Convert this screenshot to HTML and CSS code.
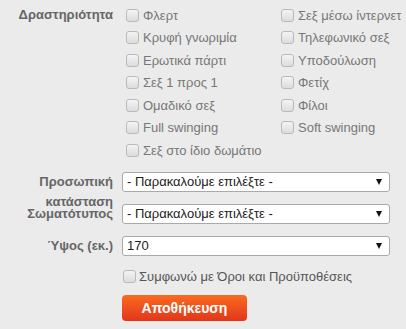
FILE: index.html
```html
<!DOCTYPE html>
<html lang="el">
<head>
  <meta charset="UTF-8" />
  <meta name="viewport" content="width=device-width, initial-scale=1.0" />
  <title>Προφίλ</title>
  <link rel="stylesheet" href="styles.css">
</head>
<body>

<form class="profile-form">
  <div class="form-row">
    <label class="form-label">Δραστηριότητα</label>
    <div class="check-grid">
      <label class="check"><input type="checkbox" /> Φλερτ</label>
      <label class="check"><input type="checkbox" /> Σεξ μέσω ίντερνετ</label>
      <label class="check"><input type="checkbox" /> Κρυφή γνωριμία</label>
      <label class="check"><input type="checkbox" /> Τηλεφωνικό σεξ</label>
      <label class="check"><input type="checkbox" /> Ερωτικά πάρτι</label>
      <label class="check"><input type="checkbox" /> Υποδούλωση</label>
      <label class="check"><input type="checkbox" /> Σεξ 1 προς 1</label>
      <label class="check"><input type="checkbox" /> Φετίχ</label>
      <label class="check"><input type="checkbox" /> Ομαδικό σεξ</label>
      <label class="check"><input type="checkbox" /> Φίλοι</label>
      <label class="check"><input type="checkbox" /> Full swinging</label>
      <label class="check"><input type="checkbox" /> Soft swinging</label>
      <label class="check"><input type="checkbox" /> Σεξ στο ίδιο δωμάτιο</label>
    </div>
  </div>

  <div class="form-row select-row">
    <label class="form-label">Προσωπική κατάσταση</label>
    <div class="select-wrap">
      <select><option>- Παρακαλούμε επιλέξτε -</option></select>
    </div>
  </div>

  <div class="form-row select-row">
    <label class="form-label">Σωματότυπος</label>
    <div class="select-wrap">
      <select><option>- Παρακαλούμε επιλέξτε -</option></select>
    </div>
  </div>

  <div class="form-row select-row">
    <label class="form-label">Ύψος (εκ.)</label>
    <div class="select-wrap">
      <select><option>170</option></select>
    </div>
  </div>

  <div class="form-row terms-row">
    <span class="form-label"></span>
    <label class="terms"><input type="checkbox" /> Συμφωνώ με Όροι και Προϋποθέσεις</label>
  </div>

  <div class="form-row">
    <span class="form-label"></span>
    <button type="button" class="save-btn">Αποθήκευση</button>
  </div>
</form>

</body>
</html>
```

FILE: styles.css
```css
body {
  margin: 0;
  background: #ebebeb;
  font-family: "Liberation Sans", Arial, sans-serif;
  font-size: 13px;
  color: #777;
}

.profile-form {
  padding-top: 4px;
}

.form-row {
  display: flex;
  align-items: flex-start;
}

.form-label {
  flex: 0 0 113px;
  padding-right: 9px;
  text-align: right;
  font-weight: bold;
  color: #666;
  line-height: 22px;
}

.check-grid {
  display: grid;
  grid-template-columns: 155px auto;
  grid-auto-rows: 22.5px;
}

.check {
  display: flex;
  align-items: center;
  white-space: nowrap;
}

input[type="checkbox"] {
  appearance: none;
  -webkit-appearance: none;
  width: 13px;
  height: 13px;
  margin: 0 4px 0 4px;
  border: 1px solid #b9b9b9;
  border-radius: 3px;
  background: linear-gradient(#f4f4f4, #dcdcdc);
}

.select-row {
  margin-top: 10px;
  height: 22px;
}

.select-row .form-label {
  line-height: 20px;
}

.select-wrap {
  position: relative;
  width: 268px;
}

.select-wrap select {
  appearance: none;
  -webkit-appearance: none;
  width: 100%;
  height: 20px;
  padding: 0 4px;
  border: 1px solid #a9a9a9;
  border-radius: 3px;
  background: #fff;
  font-family: "Liberation Sans", Arial, sans-serif;
  font-size: 13px;
  color: #222;
}

.select-wrap::after {
  content: "";
  position: absolute;
  right: 8px;
  top: 7px;
  border-left: 3.5px solid transparent;
  border-right: 3.5px solid transparent;
  border-top: 6px solid #111;
  pointer-events: none;
}

.terms-row {
  margin-top: 11px;
}

.terms {
  display: flex;
  align-items: center;
  line-height: 16px;
  color: #555;
}

.terms input[type="checkbox"] {
  margin: 0 3px 0 1px;
}

.save-btn {
  margin-top: 10px;
  width: 125px;
  height: 26px;
  border: none;
  border-radius: 4px;
  background: linear-gradient(#fb6a1f, #e2361b);
  color: #fff;
  font-family: "Liberation Sans", Arial, sans-serif;
  font-size: 14px;
  font-weight: bold;
  cursor: pointer;
}
```
